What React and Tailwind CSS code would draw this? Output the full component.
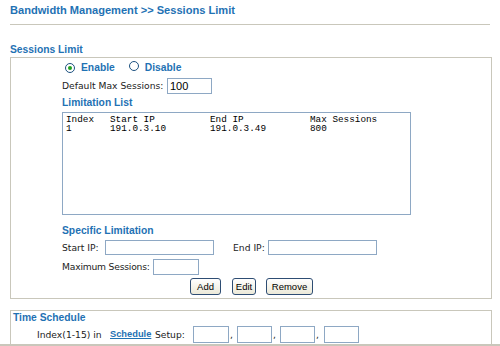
import React from "react";

const V = { fontFamily: '"DejaVu Sans", Verdana, sans-serif' };
const A = { fontFamily: '"Liberation Sans", Arial, sans-serif' };
const M = { fontFamily: '"Liberation Mono", "Courier New", monospace' };

function Radio({ checked }) {
  return (
    <span className="inline-flex h-[10px] w-[10px] shrink-0 items-center justify-center rounded-full border border-[#1c5180] bg-white">
      {checked && <span className="h-[4px] w-[4px] rounded-full bg-[#21a121]" />}
    </span>
  );
}

function Input({ w, h = "h-[15px]" }) {
  return <span className={`block shrink-0 ${h} border border-[#8ea8c4] bg-white ${w}`} />;
}

function Btn({ children, w }) {
  return (
    <button
      style={A}
      className={`flex h-[17px] ${w} items-center justify-center rounded-[3px] border border-[#2e4d73] bg-gradient-to-b from-white to-[#ece9d8] text-[9.5px] leading-none text-black`}
    >
      {children}
    </button>
  );
}

const label = "text-[10.3px] font-bold text-[#1f72b4] whitespace-nowrap";
const txt = "shrink-0 whitespace-nowrap";

const rows = [
  ["Index", "Start IP", "End IP", "Max Sessions"],
  ["1", "191.0.3.10", "191.0.3.49", "800"],
];

export default function App() {
  return (
    <div className="relative h-[346px] w-[500px] overflow-hidden bg-white" style={V}>
      <div style={A} className="flex h-[18px] items-center pl-[10px] pt-[2px] text-[11.1px] font-bold text-[#1f72b4]">
        Bandwidth Management &gt;&gt; Sessions Limit
      </div>
      <div className="ml-[10px] mr-[10px] mt-[6px] h-px bg-[#c9c7bb]" />

      <div style={A} className={`ml-[10px] mt-[19px] flex h-[12px] items-center ${label}`}>
        Sessions Limit
      </div>
      <div className="ml-[10px] mt-[1px] h-[242px] w-[482px] border border-[#c9c7bb] pl-[51px] text-[#222]">
        <div style={A} className={`mt-[3px] flex h-[14px] items-center pl-[3px] ${label}`}>
          <Radio checked />
          <span className="ml-[6px]">Enable</span>
          <span className="ml-[14px]"><Radio /></span>
          <span className="ml-[6px]">Disable</span>
        </div>
        <div className="mt-[3px] flex h-[16px] items-center text-[9.2px]">
          <span className={`w-[105px] ${txt}`}>Default Max Sessions:</span>
          <span style={A} className="flex h-[16px] w-[45px] shrink-0 items-center border border-[#8ea8c4] bg-white pl-[2px] text-[11px] text-black">100</span>
        </div>
        <div style={A} className={`mt-[2px] flex h-[14px] items-center ${label}`}>Limitation List</div>
        <div
          style={M}
          className="mt-[2px] h-[103px] w-[349px] border border-[#8ea8c4] bg-white pl-[3px] pt-[2px] text-[9.33px] leading-[9px] text-black"
        >
          {rows.map((r, i) => (
            <div key={i} className="flex whitespace-nowrap">
              <span className="w-[44px] shrink-0">{r[0]}</span>
              <span className="w-[100px] shrink-0">{r[1]}</span>
              <span className="w-[100px] shrink-0">{r[2]}</span>
              <span className="shrink-0">{r[3]}</span>
            </div>
          ))}
        </div>
        <div style={A} className={`mt-[9px] flex h-[14px] items-center ${label}`}>Specific Limitation</div>
        <div className="mt-[2px] flex h-[15px] items-center text-[9.2px]">
          <span className={`w-[43px] ${txt}`}>Start IP:</span>
          <Input w="w-[109px]" />
          <span className={`ml-[19px] w-[35px] ${txt}`}>End IP:</span>
          <Input w="w-[109px]" />
        </div>
        <div className="mt-[4px] flex h-[16px] items-center text-[9.2px]">
          <span className={`w-[91px] tracking-[-0.2px] ${txt}`}>Maximum Sessions:</span>
          <Input w="w-[46px]" h="h-[16px]" />
        </div>
        <div className="mt-[3px] flex items-center pl-[128px]">
          <Btn w="w-[31px]">Add</Btn>
          <span className="ml-[11px]"><Btn w="w-[24px]">Edit</Btn></span>
          <span className="ml-[10px]"><Btn w="w-[47px]">Remove</Btn></span>
        </div>
      </div>

      <div className="ml-[10px] mt-[11px] h-[40px] w-[482px] border border-[#c9c7bb] pl-[2px] text-[#222]">
        <div style={A} className={`mt-[1px] flex h-[12px] items-center ${label}`}>Time Schedule</div>
        <div className="mt-[2px] flex h-[17px] items-center pl-[24px] text-[9.2px]">
          <span className={`w-[73px] ${txt}`}>Index(1-15) in</span>
          <span style={A} className={`w-[45px] text-[9.3px] font-bold text-[#1f72b4] underline ${txt}`}>Schedule</span>
          <span className={`w-[38px] ${txt}`}>Setup:</span>
          <Input w="w-[36px]" h="h-[17px]" />
          <span className={`w-[8px] pl-[1px] ${txt}`}>,</span>
          <Input w="w-[35px]" h="h-[17px]" />
          <span className={`w-[8px] pl-[1px] ${txt}`}>,</span>
          <Input w="w-[35px]" h="h-[17px]" />
          <span className={`w-[9px] pl-[1px] ${txt}`}>,</span>
          <Input w="w-[35px]" h="h-[17px]" />
        </div>
      </div>
      <div className="absolute bottom-0 left-0 h-[2px] w-full bg-[#c9c7bb]" />
    </div>
  );
}
